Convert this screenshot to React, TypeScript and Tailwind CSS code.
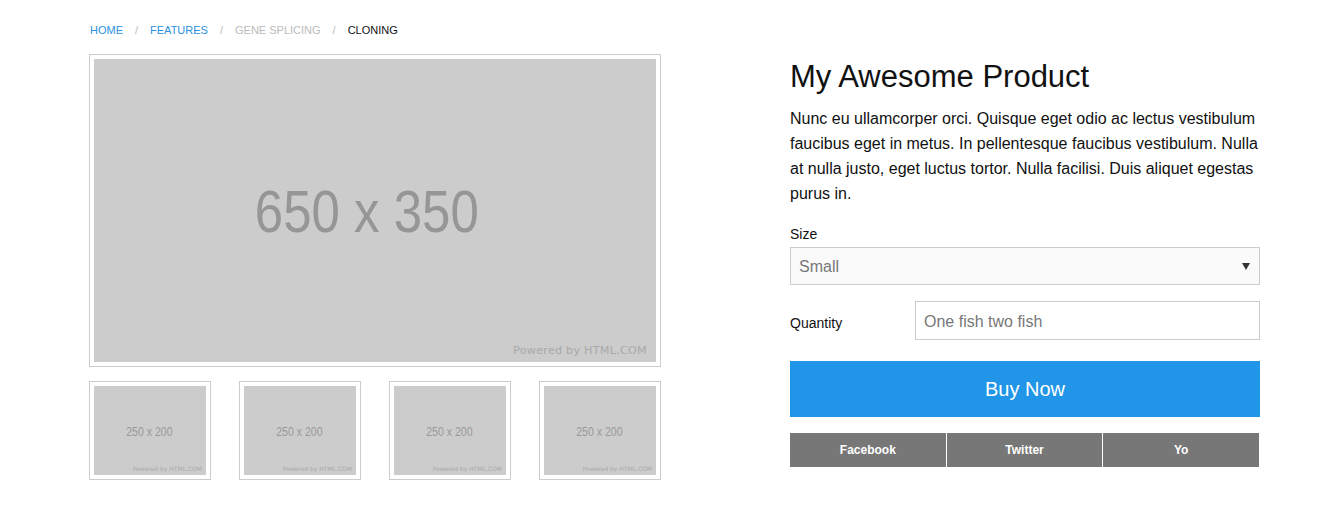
import React from "react";

function Placeholder({ big }: { big?: boolean }) {
  if (big) {
    return (
      <div className="relative flex h-[303px] w-[562px] items-center justify-center bg-[#cccccc]">
        <span className="mr-[16px] mt-[2px] inline-block scale-x-[0.85] text-[60px] leading-none text-[#969696] [font-family:'Liberation_Sans',Arial,sans-serif]">
          650 x 350
        </span>
        <span className="absolute bottom-[6px] right-[9px] text-[11.25px] leading-none tracking-[0.2px] text-[#a9a9a9] [font-family:'DejaVu_Sans',sans-serif]">
          Powered by HTML.COM
        </span>
      </div>
    );
  }
  return (
    <div className="relative flex h-[89px] w-[112px] items-center justify-center bg-[#cccccc]">
      <span className="mr-[2px] mt-[2px] inline-block scale-x-[0.88] text-[12px] leading-none text-[#999999] [font-family:'Liberation_Sans',Arial,sans-serif]">
        250 x 200
      </span>
      <span className="absolute bottom-[3px] right-[4px] text-[6px] leading-none text-[#a9a9a9] [font-family:'DejaVu_Sans',sans-serif]">
        Powered by HTML.COM
      </span>
    </div>
  );
}

export default function App() {
  return (
    <div className="min-h-[505px] w-[1344px] bg-white text-black [font-family:'Liberation_Sans',Arial,sans-serif]">
      <div className="pl-[89px] pt-[24px]">
        <nav className="flex h-[12px] items-center pl-[1px] text-[11px] uppercase leading-none">
          <span className="text-[#2a90e0]">Home</span>
          <span className="mx-[12px] text-[#bbbbbb]">/</span>
          <span className="text-[#2a90e0]">Features</span>
          <span className="mx-[12px] text-[#bbbbbb]">/</span>
          <span className="text-[#bbbbbb]">Gene Splicing</span>
          <span className="mx-[12px] text-[#bbbbbb]">/</span>
          <span className="text-[#111111]">Cloning</span>
        </nav>

        <div className="mt-[18px] flex gap-[129px]">
          <div className="w-[572px]">
            <div className="border border-[#cccccc] p-[4px]">
              <Placeholder big />
            </div>
            <div className="mt-[14px] flex gap-[28px]">
              {[0, 1, 2, 3].map((i) => (
                <div key={i} className="w-[122px] border border-[#cccccc] p-[4px]">
                  <Placeholder />
                </div>
              ))}
            </div>
          </div>

          <div className="w-[470px]">
            <h1 className="mt-[5px] text-[31px] leading-[36px] text-[#111111]">My Awesome Product</h1>
            <p className="mt-[11px] text-[16px] leading-[25px] text-[#111111]">
              Nunc eu ullamcorper orci. Quisque eget odio ac lectus vestibulum faucibus eget in metus. In pellentesque faucibus vestibulum. Nulla at nulla justo, eget luctus tortor. Nulla facilisi. Duis aliquet egestas purus in.
            </p>
            <div className="mt-[18px] text-[14px] leading-[20px] text-[#111111]">Size</div>
            <div className="mt-[3px] flex h-[38px] items-center justify-between border border-[#cccccc] bg-[#fafafa] pl-[8px] pr-[9px]">
              <span className="pt-[2px] text-[16px] text-[#777777]">Small</span>
              <span className="h-0 w-0 border-l-[4px] border-r-[4px] border-t-[7px] border-l-transparent border-r-transparent border-t-[#333333]" />
            </div>
            <div className="mt-[16px] flex items-center">
              <label className="mt-[5px] w-[125px] text-[14px] leading-[20px] text-[#111111]">Quantity</label>
              <div className="flex h-[39px] flex-1 items-center border border-[#cccccc] bg-white pl-[8px]">
                <span className="pt-[2px] text-[16px] text-[#777777]">One fish two fish</span>
              </div>
            </div>
            <button className="mt-[21px] flex h-[56px] w-full items-center justify-center bg-[#2196e8] text-[20px] text-white">
              Buy Now
            </button>
            <div className="mt-[16px] flex h-[34px] w-[469px] gap-[1px]">
              {["Facebook", "Twitter", "Yo"].map((t) => (
                <div key={t} className="flex flex-1 items-center justify-center bg-[#777777] text-[12px] font-bold text-white">
                  {t}
                </div>
              ))}
            </div>
          </div>
        </div>
      </div>
    </div>
  );
}
